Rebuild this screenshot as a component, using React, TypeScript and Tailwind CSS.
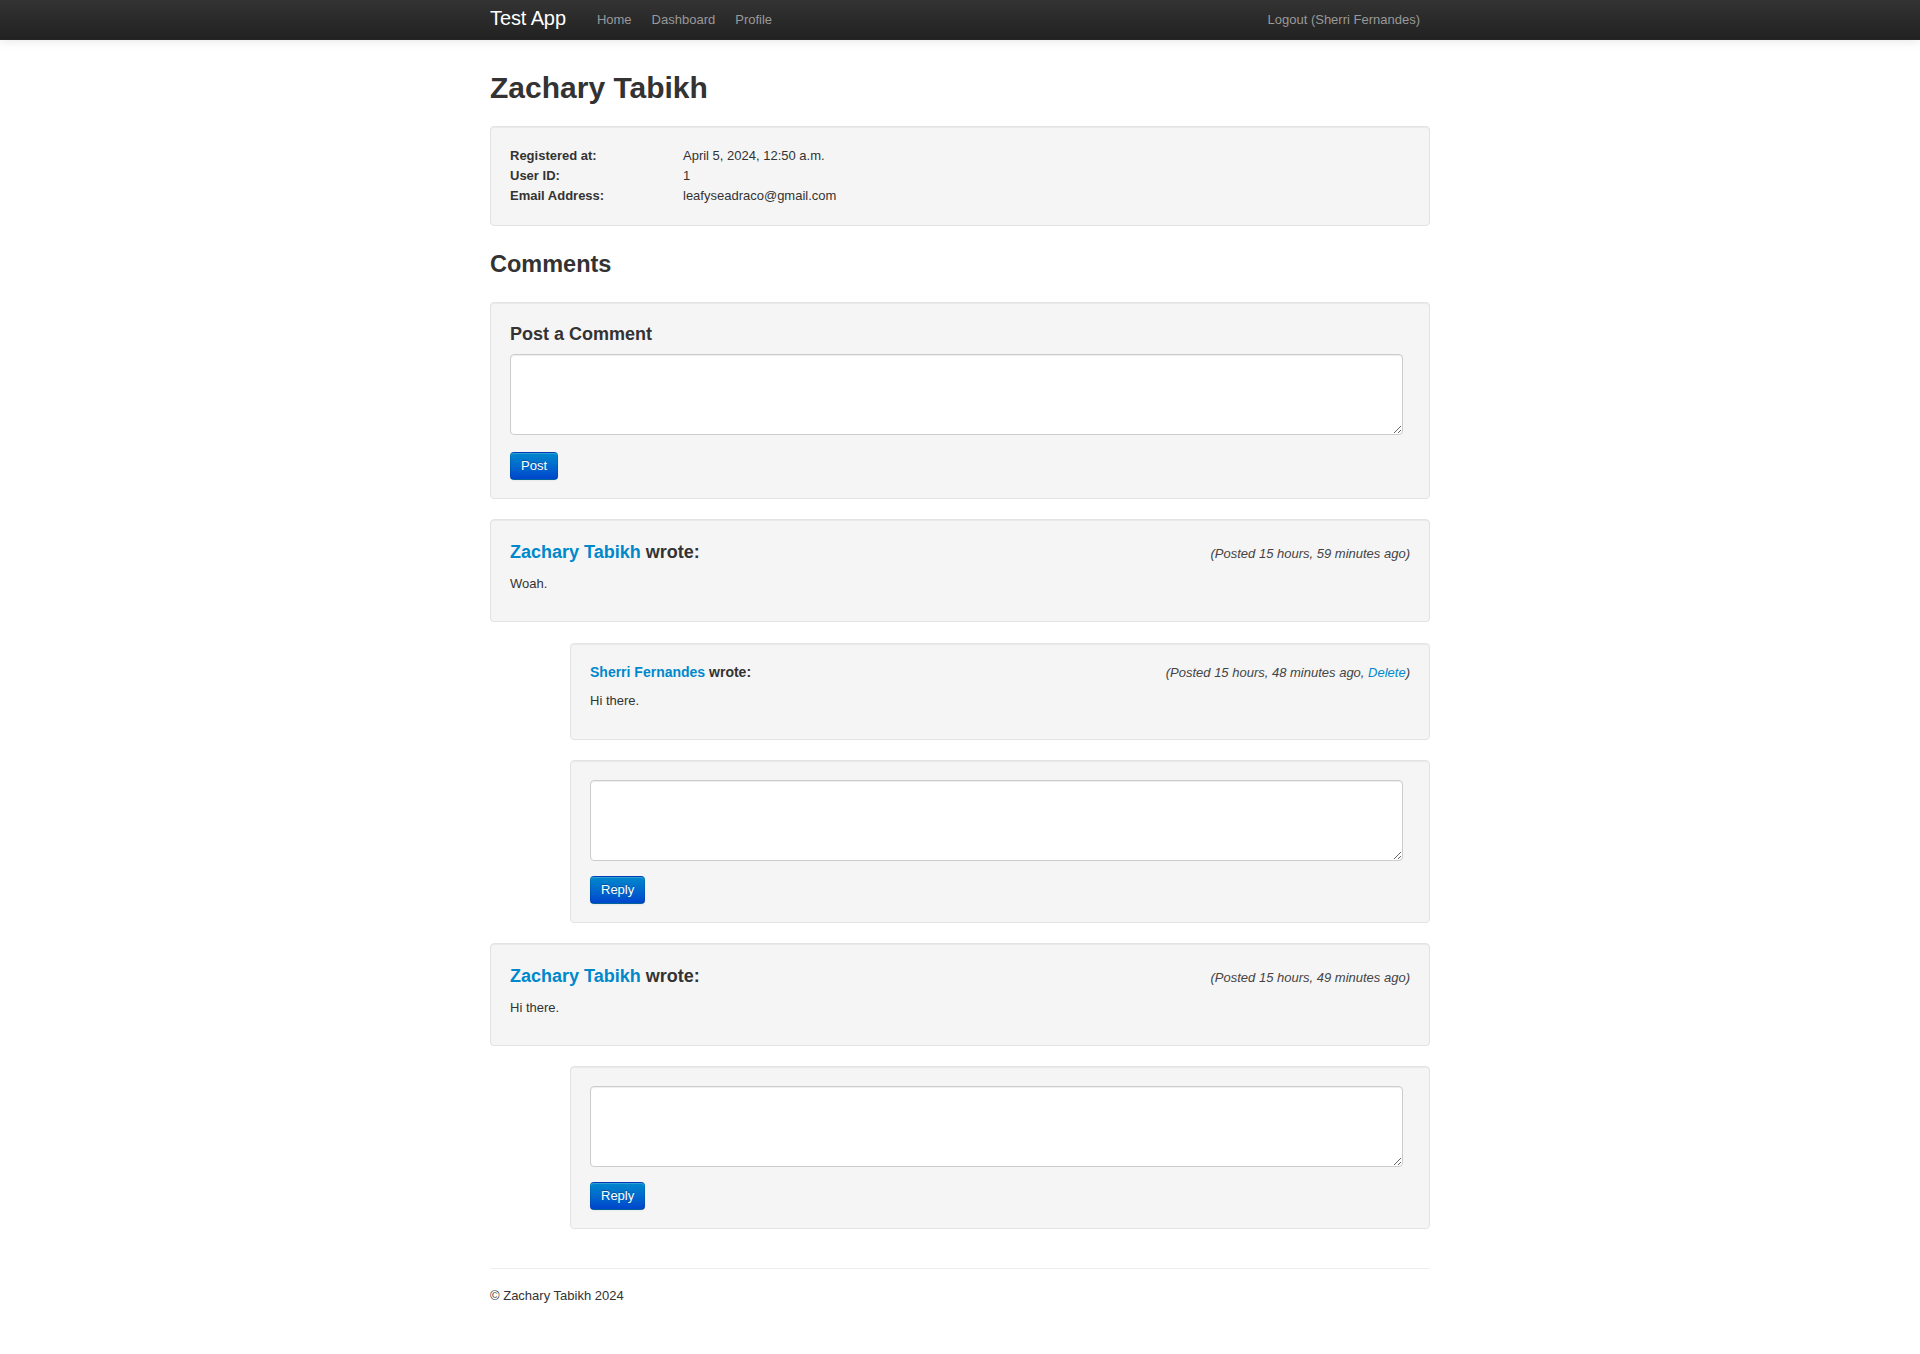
import React from "react";

type Reply = { author: string; posted: string; body: string; canDelete?: boolean };
type Comment = { author: string; posted: string; body: string; replies: Reply[] };

const comments: Comment[] = [
  {
    author: "Zachary Tabikh",
    posted: "Posted 15 hours, 59 minutes ago",
    body: "Woah.",
    replies: [{ author: "Sherri Fernandes", posted: "Posted 15 hours, 48 minutes ago", body: "Hi there.", canDelete: true }],
  },
  {
    author: "Zachary Tabikh",
    posted: "Posted 15 hours, 49 minutes ago",
    body: "Hi there.",
    replies: [],
  },
];

const well =
  "bg-[#f5f5f5] border border-[#e3e3e3] rounded-[4px] shadow-[inset_0_1px_1px_rgba(0,0,0,0.05)]";

function Textarea() {
  return (
    <textarea className="block w-[calc(100%-7px)] h-[81px] bg-white border border-[#cccccc] rounded-[4px] px-[6px] py-[4px] shadow-[inset_0_1px_1px_rgba(0,0,0,0.075)] outline-none text-[13px]" />
  );
}

function PrimaryButton({ label, gap }: { label: string; gap: string }) {
  return (
    <button
      className={`${gap} self-start h-[28px] px-[10px] text-[13px] leading-[18px] text-white rounded-[4px] border border-[rgba(0,0,0,0.1)] border-b-[rgba(0,0,0,0.25)] bg-gradient-to-b from-[#0088cc] to-[#0044cc] shadow-[inset_0_1px_0_rgba(255,255,255,0.2),0_1px_2px_rgba(0,0,0,0.05)] [text-shadow:0_-1px_0_rgba(0,0,0,0.25)]`}
    >
      {label}
    </button>
  );
}

export default function App() {
  return (
    <div className="min-h-[1354px] bg-white text-[#333333] text-[13px] leading-[20px] font-['Liberation_Sans',Arial,sans-serif]">
      {/* Navbar */}
      <div className="h-[40px] bg-gradient-to-b from-[#333333] to-[#222222] border-b border-[#252525] shadow-[0_1px_10px_rgba(0,0,0,0.1)]">
        <div className="w-[940px] mx-auto h-full flex items-center">
          <span className="text-[20px] leading-[24px] text-white tracking-[-0.1px] mb-[4px]">Test App</span>
          <nav className="ml-[31px] flex gap-5 text-[#999999]">
            <a>Home</a>
            <a>Dashboard</a>
            <a>Profile</a>
          </nav>
          <a className="ml-auto mr-[10px] text-[#999999]">Logout (Sherri Fernandes)</a>
        </div>
      </div>

      <div className="w-[940px] mx-auto">
        <h1 className="mt-[30px] text-[30px] leading-[36px] font-bold">Zachary Tabikh</h1>

        {/* Profile details */}
        <div className={`${well} mt-[20px] px-[19px] pt-[19px] pb-[19px]`}>
          <div className="grid grid-cols-[173px_1fr]">
            <span className="font-bold">Registered at:</span>
            <span>April 5, 2024, 12:50 a.m.</span>
            <span className="font-bold">User ID:</span>
            <span>1</span>
            <span className="font-bold">Email Address:</span>
            <span>leafyseadraco@gmail.com</span>
          </div>
        </div>

        <h2 className="mt-[23px] text-[23.5px] leading-[30px] font-bold">Comments</h2>

        {/* New comment */}
        <div className={`${well} mt-[23px] px-[19px] pt-[19px] pb-[18px] flex flex-col`}>
          <h3 className="text-[18px] leading-[25px] font-bold mb-[7px]">Post a Comment</h3>
          <Textarea />
          <PrimaryButton label="Post" gap="mt-[17px]" />
        </div>

        {comments.map((c, i) => (
          <div key={i}>
            <div className={`${well} mt-[20px] px-[19px] pt-[19px] pb-[19px]`}>
              <div className="flex items-baseline justify-between">
                <h4 className="text-[18px] leading-[26px] font-bold">
                  <a className="text-[#0088cc]">{c.author}</a> wrote:
                </h4>
                <span className="italic text-[#444444]">({c.posted})</span>
              </div>
              <p className="mt-[9px] mb-[8px]">{c.body}</p>
            </div>

            <div className="ml-[80px]">
              {c.replies.map((r, j) => (
                <div key={j} className={`${well} mt-[21px] px-[19px] pt-[19px] pb-[19px]`}>
                  <div className="flex items-baseline justify-between">
                    <h5 className="text-[14px] leading-[18px] font-bold">
                      <a className="text-[#0088cc]">{r.author}</a> wrote:
                    </h5>
                    <span className="italic text-[#444444]">
                      ({r.posted}
                      {r.canDelete && (
                        <>
                          , <a className="text-[#0088cc]">Delete</a>
                        </>
                      )}
                      )
                    </span>
                  </div>
                  <p className="mt-[8px] mb-[9px]">{r.body}</p>
                </div>
              ))}

              {/* Reply form */}
              <div className={`${well} mt-[20px] px-[19px] pt-[19px] pb-[18px] flex flex-col`}>
                <Textarea />
                <PrimaryButton label="Reply" gap="mt-[15px]" />
              </div>
            </div>
          </div>
        ))}

        {/* Footer */}
        <hr className="mt-[39px] border-0 border-t border-[#eeeeee]" />
        <footer className="mt-[17px] pb-[40px]">© Zachary Tabikh 2024</footer>
      </div>
    </div>
  );
}
